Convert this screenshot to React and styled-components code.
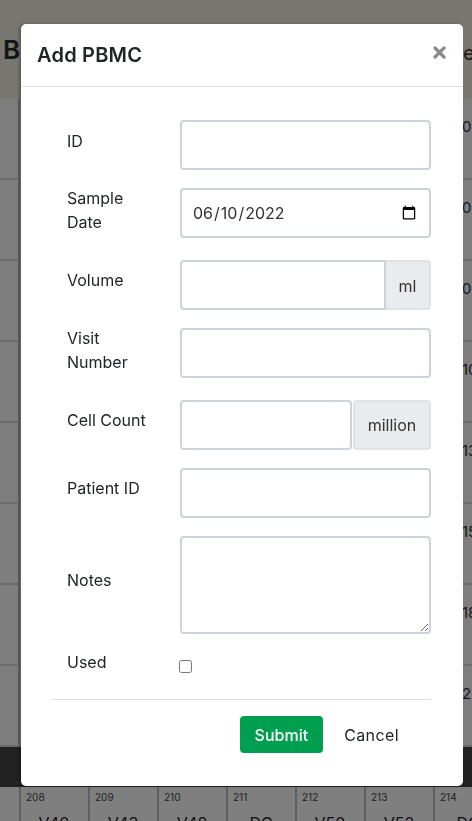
import React from 'react';
import styled, { createGlobalStyle } from 'styled-components';

const GlobalStyle = createGlobalStyle`
  html, body {
    margin: 0;
    padding: 0;
    overflow: hidden;
  }
  body {
    font-family: Inter, "Liberation Sans", sans-serif;
    color: #212529;
  }
  * {
    box-sizing: border-box;
  }
`;

const Page = styled.div`
  width: 472px;
  height: 821px;
  background: #fcfcfc;
  display: flex;
  flex-direction: column;
  overflow: hidden;
`;

const PageHeader = styled.div`
  flex-shrink: 0;
  height: 99px;
  background: #f0ece0;
  display: flex;
  align-items: center;
  justify-content: space-between;
  overflow: hidden;
`;

const PageTitle = styled.h2`
  margin: 0 0 0 3px;
  font-size: 26px;
  font-weight: 600;
  color: #2a2a2a;
  white-space: nowrap;
`;

const HeaderTail = styled.span`
  width: 9px;
  font-size: 20px;
  color: #333;
  overflow: hidden;
  margin-top: 6px;
`;

const TableRow = styled.div`
  flex-shrink: 0;
  height: 81px;
  display: grid;
  grid-template-columns: 20px 1fr 10px;
  border-bottom: 2px solid #d4d6d8;
`;

const SideCell = styled.div`
  border-right: 2px solid #bfc4ca;
`;

const TailCell = styled.div`
  padding-top: 18px;
  font-size: 15px;
  color: #333;
  overflow: hidden;
  white-space: nowrap;
`;

const DarkBar = styled.div`
  flex-shrink: 0;
  height: 40px;
  background: #444;
`;

const BoxStrip = styled.div`
  flex: 1;
  display: grid;
  grid-template-columns: 19px repeat(7, 69px);
  background: #fff;
`;

const BoxCell = styled.div`
  border-left: 2px solid #b9c0c8;
  padding: 4px 0 0 5px;
  display: flex;
  flex-direction: column;
  overflow: hidden;
`;

const BoxNum = styled.span`
  font-size: 10px;
  color: #444;
`;

const BoxCode = styled.span`
  font-size: 16px;
  color: #222;
  text-align: center;
  margin-top: 10px;
  padding-right: 6px;
`;

const Backdrop = styled.div`
  position: fixed;
  inset: 0;
  background: rgba(0, 0, 0, 0.5);
  display: flex;
  align-items: flex-start;
  padding: 24px 0 0 21px;
`;

const Modal = styled.div`
  width: 442px;
  height: 762px;
  background: #fff;
  border-radius: 5px;
  box-shadow: -2px 0 3px rgba(0, 0, 0, 0.25);
  display: flex;
  flex-direction: column;
`;

const ModalHeader = styled.div`
  height: 63px;
  padding: 0 17px 0 16px;
  border-bottom: 1px solid #dee2e6;
  display: flex;
  align-items: center;
  justify-content: space-between;
`;

const ModalTitle = styled.h4`
  margin: 0;
  font-size: 20px;
  font-weight: 600;
  color: #212529;
  letter-spacing: 0.2px;
`;

const CloseButton = styled.button`
  border: 0;
  background: none;
  padding: 0;
  margin-top: -6px;
  display: flex;
  cursor: pointer;
`;

const ModalBody = styled.div`
  padding: 33px 32px 0 31px;
`;

const FormRow = styled.div`
  display: grid;
  grid-template-columns: 128px 1fr;
  align-items: center;
  margin-bottom: ${({ gap }) => gap}px;
`;

/* negative top margin nudges the centred label up by half its value */
const Label = styled.label`
  padding-left: 15px;
  font-size: 16px;
  line-height: 24px;
  color: #212529;
  margin-top: ${({ lift = 0 }) => -lift}px;
`;

const TextInput = styled.input`
  width: 100%;
  height: 50px;
  padding: 0 10px;
  border: 2px solid #cdd3d9;
  border-radius: 4px;
  font-family: inherit;
  font-size: 16px;
  color: #333;
  background: #fff;
  outline: none;
`;

const InputGroup = styled.div`
  display: flex;
  gap: ${({ split }) => (split ? 1 : 0)}px;
`;

const GroupInput = styled(TextInput)`
  flex: 1;
  min-width: 0;
  border-top-right-radius: ${({ split }) => (split ? 4 : 0)}px;
  border-bottom-right-radius: ${({ split }) => (split ? 4 : 0)}px;
`;

const Addon = styled.span`
  width: ${({ w }) => w}px;
  height: 50px;
  display: flex;
  align-items: center;
  justify-content: center;
  background: #e9ecef;
  border: 2px solid #dfe3e7;
  border-left: ${({ split }) => (split ? '2px solid #dfe3e7' : '0')};
  border-radius: ${({ split }) => (split ? '4px' : '0 4px 4px 0')};
  font-size: 16px;
  color: #333;
  padding-top: ${({ split }) => (split ? 0 : 2)}px;
`;

const NotesArea = styled.textarea`
  width: 100%;
  height: 98px;
  border: 2px solid #cdd3d9;
  border-radius: 4px;
  font-family: inherit;
  font-size: 16px;
  padding: 8px 10px;
  display: block;
`;

const Checkbox = styled.input`
  margin: 12px 0 0 -1px;
  width: 13px;
  height: 13px;
`;

const Divider = styled.hr`
  margin: 22px 0 16px 0;
  border: 0;
  border-top: 1px solid #dddddd;
`;

const Footer = styled.div`
  display: flex;
  justify-content: flex-end;
  align-items: center;
  padding-right: 20px;
  gap: 9px;
`;

const SubmitButton = styled.button`
  height: 37px;
  padding: 0 15px;
  border: 0;
  border-radius: 4px;
  background: #009f4f;
  color: #fff;
  font-family: inherit;
  font-size: 16px;
  font-weight: 500;
`;

const CancelButton = styled.button`
  height: 37px;
  padding: 0 12px;
  border: 0;
  background: none;
  color: #212529;
  font-family: inherit;
  font-size: 16px;
  letter-spacing: 0.4px;
`;

const rightTails = ['02', '05', '08', '10', '13', '15', '18', '20'];
const boxes = [
  ['208', 'V40'],
  ['209', 'V43'],
  ['210', 'V48'],
  ['211', 'DC'],
  ['212', 'V50'],
  ['213', 'V52'],
  ['214', 'DC'],
];

const CloseIcon = () => (
  <svg width="13" height="13" viewBox="0 0 13 13">
    <path d="M2 2 L11 11 M11 2 L2 11" stroke="#8a8a8a" strokeWidth="3.2" strokeLinecap="round" />
  </svg>
);

export default function App() {
  return (
    <>
      <GlobalStyle />
      <Page>
        <PageHeader>
          <PageTitle>Bone Marrow</PageTitle>
          <HeaderTail>e</HeaderTail>
        </PageHeader>
        {rightTails.map((t) => (
          <TableRow key={t}>
            <SideCell />
            <div />
            <TailCell>{t}</TailCell>
          </TableRow>
        ))}
        <DarkBar />
        <BoxStrip>
          <div />
          {boxes.map(([n, c]) => (
            <BoxCell key={n}>
              <BoxNum>{n}</BoxNum>
              <BoxCode>{c}</BoxCode>
            </BoxCell>
          ))}
        </BoxStrip>
      </Page>

      <Backdrop>
        <Modal>
          <ModalHeader>
            <ModalTitle>Add PBMC</ModalTitle>
            <CloseButton aria-label="Close">
              <CloseIcon />
            </CloseButton>
          </ModalHeader>
          <ModalBody>
            <FormRow gap={18}>
              <Label lift={8}>ID</Label>
              <TextInput type="text" />
            </FormRow>
            <FormRow gap={22}>
              <Label lift={6}>
                Sample
                <br />
                Date
              </Label>
              <TextInput type="date" defaultValue="2022-06-10" />
            </FormRow>
            <FormRow gap={18}>
              <Label lift={10}>Volume</Label>
              <InputGroup>
                <GroupInput type="text" />
                <Addon w={45}>ml</Addon>
              </InputGroup>
            </FormRow>
            <FormRow gap={22}>
              <Label lift={6}>
                Visit
                <br />
                Number
              </Label>
              <TextInput type="text" />
            </FormRow>
            <FormRow gap={18}>
              <Label lift={10}>Cell Count</Label>
              <InputGroup split>
                <GroupInput type="text" split />
                <Addon w={78} split>
                  million
                </Addon>
              </InputGroup>
            </FormRow>
            <FormRow gap={18}>
              <Label lift={10}>Patient ID</Label>
              <TextInput type="text" />
            </FormRow>
            <FormRow gap={14}>
              <Label lift={10}>Notes</Label>
              <NotesArea />
            </FormRow>
            <FormRow gap={0}>
              <Label lift={2}>Used</Label>
              <div>
                <Checkbox type="checkbox" />
              </div>
            </FormRow>
            <Divider />
            <Footer>
              <SubmitButton>Submit</SubmitButton>
              <CancelButton>Cancel</CancelButton>
            </Footer>
          </ModalBody>
        </Modal>
      </Backdrop>
    </>
  );
}
